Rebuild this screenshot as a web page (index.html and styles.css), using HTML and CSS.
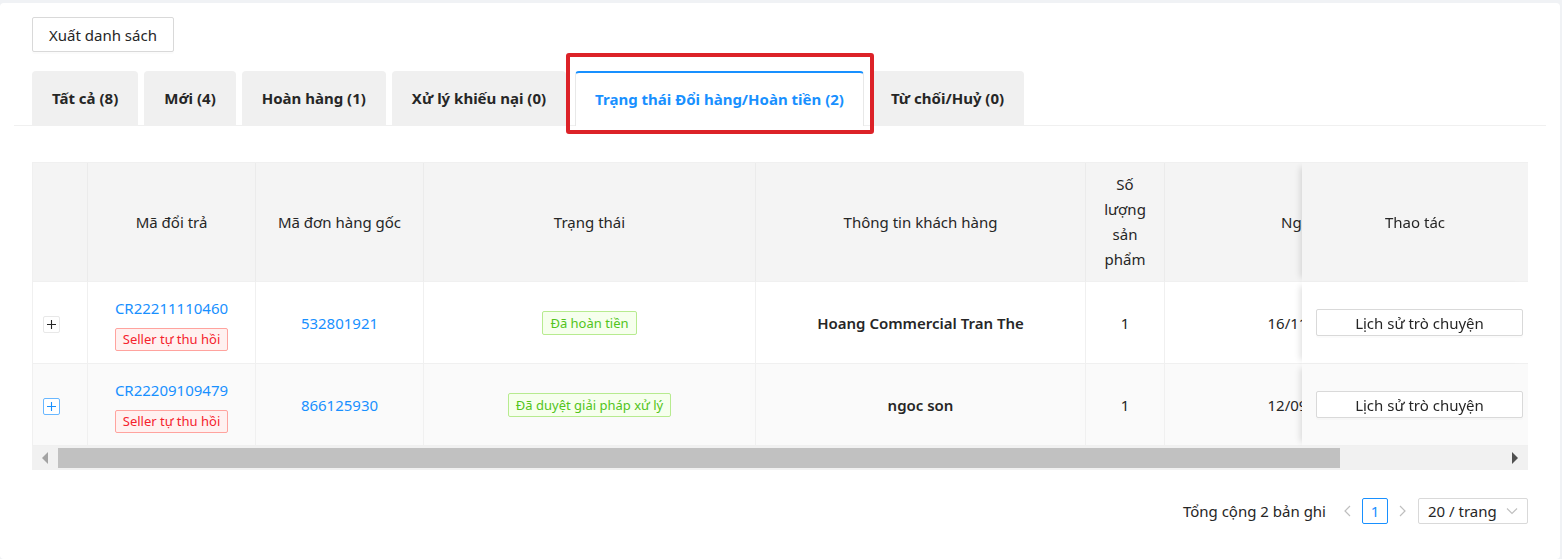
FILE: index.html
```html
<!DOCTYPE html>
<html>
    <head>
        <title> Đổi trả / Hoàn tiền </title>
        <link rel="stylesheet" href="styles.css">
    </head>
    <body>
        <div class="card">
            <div class="toolbar">
                <button class="btn">Xuất danh sách</button>
            </div>

            <div class="tabs">
                <div class="tab">Tất cả (8)</div>
                <div class="tab">Mới (4)</div>
                <div class="tab">Hoàn hàng (1)</div>
                <div class="tab">Xử lý khiếu nại (0)</div>
                <div class="tab active">
                    Trạng thái Đổi hàng/Hoàn tiền (2)
                    <span class="highlight"></span>
                </div>
                <div class="tab">Từ chối/Huỷ (0)</div>
            </div>

            <div class="table-box">
                <div class="table-wrap">
                    <table class="table">
                        <colgroup>
                            <col style="width:55px">
                            <col style="width:168px">
                            <col style="width:168px">
                            <col style="width:332px">
                            <col style="width:330px">
                            <col style="width:79px">
                            <col style="width:328px">
                            <col style="width:226px">
                        </colgroup>
                        <thead>
                            <tr>
                                <th></th>
                                <th>Mã đổi trả</th>
                                <th>Mã đơn hàng gốc</th>
                                <th>Trạng thái</th>
                                <th>Thông tin khách hàng</th>
                                <th>Số lượng sản phẩm</th>
                                <th>Ngày yêu cầu</th>
                                <th class="fixed">Thao tác</th>
                            </tr>
                        </thead>
                        <tbody>
                            <tr>
                                <td class="expand-cell">
                                    <span class="expand">
                                        <svg width="11" height="11" viewBox="0 0 11 11"><path d="M5.5 1v9M1 5.5h9" stroke="currentColor" stroke-width="1.1"/></svg>
                                    </span>
                                </td>
                                <td>
                                    <a class="link code">CR22211110460</a>
                                    <span class="tag red">Seller tự thu hồi</span>
                                </td>
                                <td><a class="link">532801921</a></td>
                                <td><span class="tag green">Đã hoàn tiền</span></td>
                                <td class="strong">Hoang Commercial Tran The</td>
                                <td>1</td>
                                <td>16/11/2022 10:25</td>
                                <td class="fixed"><button class="btn btn-block">Lịch sử trò chuyện</button></td>
                            </tr>
                            <tr class="hover">
                                <td class="expand-cell">
                                    <span class="expand blue">
                                        <svg width="11" height="11" viewBox="0 0 11 11"><path d="M5.5 1v9M1 5.5h9" stroke="currentColor" stroke-width="1.1"/></svg>
                                    </span>
                                </td>
                                <td>
                                    <a class="link code">CR22209109479</a>
                                    <span class="tag red">Seller tự thu hồi</span>
                                </td>
                                <td><a class="link">866125930</a></td>
                                <td><span class="tag green">Đã duyệt giải pháp xử lý</span></td>
                                <td class="strong">ngoc son</td>
                                <td>1</td>
                                <td>12/09/2022 09:47</td>
                                <td class="fixed"><button class="btn btn-block">Lịch sử trò chuyện</button></td>
                            </tr>
                        </tbody>
                    </table>
                </div>
                <div class="hscroll">
                    <span class="arrow left"></span>
                    <span class="thumb"></span>
                    <span class="arrow right"></span>
                </div>
            </div>

            <div class="pager">
                <span class="total">Tổng cộng 2 bản ghi</span>
                <span class="page-nav disabled">
                    <svg width="10" height="12" viewBox="0 0 10 12"><path d="M7 1L2 6l5 5" fill="none" stroke="currentColor" stroke-width="1.2"/></svg>
                </span>
                <span class="page-item current">1</span>
                <span class="page-nav disabled">
                    <svg width="10" height="12" viewBox="0 0 10 12"><path d="M3 1l5 5-5 5" fill="none" stroke="currentColor" stroke-width="1.2"/></svg>
                </span>
                <span class="page-size">
                    20 / trang
                    <svg width="12" height="8" viewBox="0 0 12 8"><path d="M1 1.5l5 5 5-5" fill="none" stroke="#bfbfbf" stroke-width="1.1"/></svg>
                </span>
            </div>
        </div>
    </body>
</html>
```

FILE: styles.css
```css
body {
    margin: 0;
    background-color: #f0f2f5;
    font-family: "Noto Sans", "Open Sans", sans-serif;
    font-size: 15px;
    color: #262626;
}

.card {
    width: 1560px;
    height: 556px;
    margin-top: 3px;
    padding: 14px 14px 0;
    box-sizing: border-box;
    background-color: #fff;
    border-radius: 4px;
}

.toolbar {
    padding: 0 18px;
}

.btn {
    height: 35px;
    padding: 0 16px;
    font-family: inherit;
    font-size: 15px;
    color: #262626;
    background-color: #fff;
    border: 1px solid #d9d9d9;
    border-radius: 2px;
    box-shadow: 0 2px 0 rgba(0, 0, 0, 0.016);
    cursor: pointer;
}

/* tabs */
.tabs {
    display: flex;
    gap: 6px;
    margin-top: 19px;
    padding: 0 18px;
    border-bottom: 1px solid #f0f0f0;
}
.tab {
    height: 54px;
    line-height: 54px;
    padding: 0 20px;
    font-weight: 700;
    background-color: #f0f0f0;
    border-radius: 4px 4px 0 0;
    white-space: nowrap;
}
.tab.active {
    position: relative;
    height: 55px;
    line-height: 52px;
    margin: 0 1px -1px 3px;
    padding: 0 19px;
    box-sizing: border-box;
    color: #1890ff;
    background-color: #fff;
    border: 1px solid #e8e8e8;
    border-top: 2px solid #1890ff;
    border-bottom: none;
}
.highlight {
    position: absolute;
    top: -20px;
    left: -10px;
    right: -11px;
    bottom: -8px;
    border: 4px solid #dc2228;
    border-radius: 3px;
    pointer-events: none;
}

/* table */
.table-box {
    margin: 36px 18px 0;
    width: 1496px;
}
.table-wrap {
    overflow: hidden;
    border-top: 1px solid #f0f0f0;
    border-left: 1px solid #f0f0f0;
}
.table {
    width: 1686px;
    table-layout: fixed;
    border-collapse: separate;
    border-spacing: 0;
}
.table th {
    padding: 9px 16px;
    font-weight: 400;
    line-height: 25px;
    background-color: #f4f4f4;
    border-bottom: 1px solid #f0f0f0;
    border-right: 1px solid #ebebeb;
    text-align: center;
}
.table td {
    padding: 12px 16px;
    line-height: 22px;
    text-align: center;
    background-color: #fff;
    border-bottom: 1px solid #f0f0f0;
    border-right: 1px solid #f0f0f0;
    white-space: nowrap;
}
.table tr.hover td {
    background-color: #fafafa;
}
.table .fixed {
    position: sticky;
    right: 0;
    border-right: none;
    box-shadow: -6px 0 6px -4px rgba(0, 0, 0, 0.12);
}
.table td.fixed {
    padding: 0 5px 0 14px;
}
.table td.expand-cell {
    padding: 0 0 0 10px;
    text-align: left;
}
.expand {
    display: inline-flex;
    justify-content: center;
    align-items: center;
    width: 17px;
    height: 17px;
    box-sizing: border-box;
    color: #262626;
    background-color: #fff;
    border: 1px solid #e8e8e8;
    border-radius: 2px;
    vertical-align: middle;
}
.expand.blue {
    color: #1890ff;
    border-color: #69b7ff;
}

.link {
    color: #1890ff;
    text-decoration: none;
}
.link.code {
    display: block;
    margin-top: 3px;
}
.strong {
    font-weight: 600;
}

.tag {
    display: inline-block;
    height: 23px;
    line-height: 21px;
    padding: 0 7px;
    font-size: 13px;
    border: 1px solid;
    border-radius: 2px;
    box-sizing: border-box;
}
.tag.red {
    margin-top: 9px;
    color: #f5222d;
    background-color: #fff1f0;
    border-color: #ffa39e;
}
.tag.green {
    height: 24px;
    line-height: 22px;
    color: #52c41a;
    background-color: #f6ffed;
    border-color: #b7eb8f;
}

.btn-block {
    width: 100%;
    height: 27px;
    padding: 0;
}

/* fake scrollbar */
.hscroll {
    display: flex;
    align-items: center;
    height: 24px;
    background-color: #f1f1f1;
}
.thumb {
    width: 1282px;
    height: 20px;
    background-color: #c1c1c1;
}
.arrow {
    display: flex;
    justify-content: center;
    width: 26px;
}
.arrow::before {
    content: "";
    border-top: 6px solid transparent;
    border-bottom: 6px solid transparent;
}
.arrow.left::before {
    border-right: 6px solid #a3a3a3;
}
.arrow.right {
    margin-left: auto;
}
.arrow.right::before {
    border-left: 6px solid #505050;
}

/* pagination */
.pager {
    display: flex;
    justify-content: flex-end;
    align-items: center;
    margin: 28px 18px 0;
    height: 26px;
}
.total {
    margin-right: 10px;
}
.page-nav {
    display: flex;
    justify-content: center;
    align-items: center;
    width: 24px;
    height: 26px;
    color: #bfbfbf;
}
.page-item {
    width: 26px;
    height: 26px;
    margin: 0 2px;
    line-height: 24px;
    box-sizing: border-box;
    text-align: center;
    border: 1px solid #d9d9d9;
    border-radius: 2px;
}
.page-item.current {
    color: #1890ff;
    border-color: #1890ff;
}
.page-size {
    display: flex;
    align-items: center;
    justify-content: space-between;
    width: 110px;
    height: 26px;
    margin-left: 4px;
    padding: 0 9px;
    box-sizing: border-box;
    border: 1px solid #d9d9d9;
    border-radius: 2px;
}
```
